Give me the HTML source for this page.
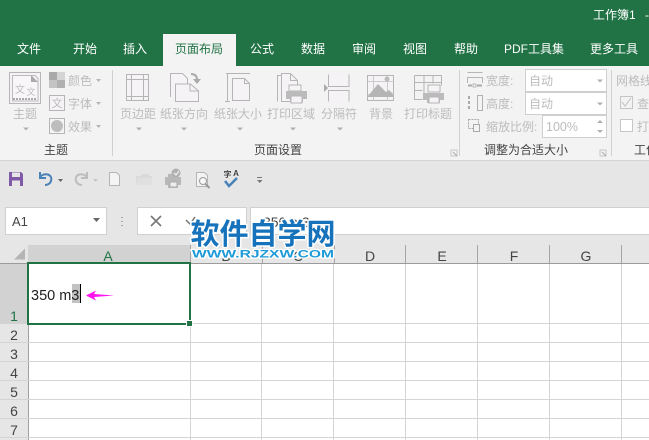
<!DOCTYPE html>
<html><head><meta charset="utf-8"><style>
html,body{margin:0;padding:0;width:649px;height:440px;overflow:hidden;background:#fff}
svg{display:block}
text{font-family:"Liberation Sans","Noto Sans CJK SC",sans-serif;font-size:12px}
.t{fill:#fff;font-size:12px}
.d{fill:#bcbcbc;font-size:12px}
.g{fill:#444;font-size:12px;text-anchor:middle}
.m{text-anchor:middle}
.h{fill:#444;font-size:14px;text-anchor:middle}
.i{fill:none;stroke:#b5b5b5;stroke-width:1}
.f{fill:#b5b5b5}
.p{fill:#f6f3f6;stroke:#b5b5b5;stroke-width:1}
</style></head><body>
<svg width="649" height="440" viewBox="0 0 649 440" xmlns="http://www.w3.org/2000/svg">
<rect width="649" height="66" fill="#217346"/>
<rect y="66" width="649" height="94" fill="#f3f3f3"/>
<rect y="160" width="649" height="1.5" fill="#d4d4d4"/>
<rect y="161" width="649" height="74" fill="#e6e6e6"/>
<text x="593" y="19" class="t">工作簿1</text><text x="645" y="19" class="t">-</text>
<rect x="163" y="34" width="73" height="32" fill="#f3f3f3"/>
<g class="m">
<text x="29" y="53" class="t m">文件</text>
<text x="85" y="53" class="t m">开始</text>
<text x="135" y="53" class="t m">插入</text>
<text x="199" y="53" class="m" fill="#217346">页面布局</text>
<text x="262" y="53" class="t m">公式</text>
<text x="313" y="53" class="t m">数据</text>
<text x="364" y="53" class="t m">审阅</text>
<text x="415" y="53" class="t m">视图</text>
<text x="466" y="53" class="t m">帮助</text>
<text x="534" y="53" class="t m">PDF工具集</text>
<text x="614" y="53" class="t m">更多工具</text>
</g>

<!-- theme group -->
<rect x="9.5" y="72.5" width="31" height="31" fill="#f6f3f6" stroke="#b5b5b5"/>
<path d="M12.5 75.5H35l3 3V101H12.5z" fill="#f8f6f8" stroke="#bbb"/>
<path d="M31 75l7 7h-7z" fill="#aaa"/>
<text x="20" y="93" class="d" style="font-size:10px" text-anchor="middle">文</text>
<text x="31" y="95" class="d" style="font-size:9px" text-anchor="middle">文</text>
<path d="M13 99h24" stroke="#aaa" stroke-width="2" stroke-dasharray="2 1"/>
<text x="25" y="118" class="d m">主题</text>
<path d="M23 127.500h6l-3 3z" fill="#b0b0b0"/>
<rect x="49" y="72" width="16" height="16" fill="#c4c4c4"/>
<rect x="49" y="72" width="8" height="8" fill="#a9a9a9"/><rect x="57" y="80" width="8" height="8" fill="#b0b0b0"/><rect x="57" y="72" width="8" height="8" fill="#d4d4d4"/>
<text x="68" y="85" class="d">颜色</text><path d="M96 79h5l-2.500 3z" fill="#b5b5b5"/>
<rect x="49.500" y="95.500" width="15" height="15" fill="#f6f3f6" stroke="#b5b5b5"/>
<text x="57" y="107" class="d m" style="font-size:11px">文</text>
<text x="68" y="108" class="d">字体</text><path d="M96 102h5l-2.500 3z" fill="#b5b5b5"/>
<rect x="49.500" y="118.500" width="15" height="15" fill="#f6f3f6" stroke="#b5b5b5"/>
<circle cx="57" cy="126" r="6" fill="#bdbdbd"/>
<text x="68" y="131" class="d">效果</text><path d="M96 125h5l-2.500 3z" fill="#b5b5b5"/>
<text x="56" y="154" class="g">主题</text>
<rect x="112" y="70" width="1" height="86" fill="#d0d0d0"/>

<!-- page margin -->
<rect x="126.500" y="74.500" width="22" height="26" class="p"/>
<path d="M126.500 79.500h22M126.500 96.500h22M131.500 74.500v26M143.500 74.500v26" class="i"/>
<text x="138" y="118" class="d m">页边距</text><path d="M136 127.500h6l-3 3z" fill="#b0b0b0"/>
<!-- orientation -->
<path d="M170.500 97V73.500h12l5 5V84" class="p"/>
<path d="M175.500 84.500h15l8 7v10.500h-23z" class="p" transform="translate(0,-0.500)"/>
<path d="M190 84v7h8" class="i"/>
<path d="M191 74c4 0 6 2 6 6" fill="none" stroke="#aaa" stroke-width="2"/><path d="M193 79h8l-4 5z" fill="#aaa"/>
<text x="184" y="118" class="d m">纸张方向</text><path d="M184 127.500h6l-3 3z" transform="translate(-3,0)" fill="#b0b0b0"/>
<!-- size -->
<path d="M226 73.500h24M227.500 74v27M225 101.500h5" class="i"/>
<path d="M232.500 78.500h12l5 5v17h-17z" class="p"/>
<path d="M244.500 78.500v5h5" class="i"/>
<text x="238" y="118" class="d m">纸张大小</text><path d="M237 127.500h6l-3 3z" fill="#b0b0b0"/>
<!-- print area -->
<path d="M277.500 101.500V75.500h4" class="i"/>
<path d="M281.500 73.500h9l7 7v21h-16z" class="p"/>
<path d="M290.500 73.500v7h7" class="i"/>
<rect x="289" y="85" width="12" height="6" fill="#f6f3f6" stroke="#b5b5b5"/>
<path d="M286 91h21v8h-4v3h-13v-3h-4z" fill="#bbb"/><rect x="291" y="96" width="11" height="7" fill="#f6f3f6" stroke="#b5b5b5"/>
<text x="291" y="118" class="d m">打印区域</text><path d="M290 127.500h6l-3 3z" fill="#b0b0b0"/>
<!-- breaks -->
<path d="M328.500 74.500v12h20.500V74.500M328.500 101.500V90.500h20.500v11" class="p"/>
<path d="M324 84l4 4-4 4z" fill="#aaa"/>
<text x="339" y="118" class="d m">分隔符</text><path d="M337 127.500h6l-3 3z" fill="#b0b0b0"/>
<!-- background -->
<rect x="367.500" y="75.500" width="26" height="25" class="p"/>
<path d="M367.500 81.500h26M367.500 94.500h26M373.500 75.500v25M387.500 75.500v25" stroke="#ccc" fill="none"/>
<circle cx="387" cy="79" r="2.500" fill="#bbb"/>
<path d="M368 96l10-12 8 8 3-2 4 4v3h-25z" fill="#b5b5b5"/>
<text x="381" y="118" class="d m">背景</text>
<!-- print titles -->
<path d="M414.500 75.500h27v10M414.500 75.500v24h8M414.500 82.500h27M414.500 90.500h8M424 75.500v24M433 75.500v8" class="i"/>
<rect x="428" y="85" width="12" height="7" fill="#f6f3f6" stroke="#b5b5b5"/>
<path d="M423 93h21v7h-4v3h-13v-3h-4z" fill="#bbb"/><rect x="429" y="97" width="10" height="6" fill="#f6f3f6" stroke="#b5b5b5"/>
<text x="428" y="118" class="d m">打印标题</text>
<text x="278" y="154" class="g">页面设置</text>
<rect x="451" y="150" width="6" height="6" fill="none" stroke="#bbb" stroke-width=".8"/><path d="M453 152l4 4" stroke="#aaa"/>
<rect x="459" y="70" width="1" height="86" fill="#d0d0d0"/>

<!-- scale group -->
<path d="M467.500 72.500h15M467.500 77.500h15M467.500 77v6M482.500 77v6" class="i"/>
<path d="M468 85.500h4M477 85.500h5" stroke="#aaa" stroke-width="2"/>
<rect x="473" y="84" width="3" height="3" fill="none" stroke="#aaa" stroke-width=".8"/>
<text x="486" y="85" class="d">宽度:</text>
<rect x="525.500" y="69.500" width="81" height="22" fill="#fff" stroke="#cfcfcf"/>
<text x="529" y="85" class="d" style="font-size:12px">自动</text><path d="M597 79.500h6l-3 3z" fill="#b0b0b0"/>
<path d="M469 96v14" stroke="#aaa" stroke-width="2" stroke-dasharray="3 2"/>
<rect x="477.500" y="95.500" width="5" height="15" fill="none" stroke="#b0b0b0"/>
<text x="486" y="108" class="d">高度:</text>
<rect x="525.500" y="92.500" width="81" height="22" fill="#fff" stroke="#cfcfcf"/>
<text x="529" y="108" class="d" style="font-size:12px">自动</text><path d="M597 102.500h6l-3 3z" fill="#b0b0b0"/>
<rect x="468.500" y="119.500" width="10" height="9" fill="none" stroke="#aaa" stroke-dasharray="2 1"/><rect x="473.500" y="124.500" width="6" height="7" fill="#f3f3f3" stroke="#aaa"/>
<text x="486" y="131" class="d">缩放比例:</text>
<rect x="542.500" y="115.500" width="64" height="22" fill="#fff" stroke="#cfcfcf"/>
<text x="546" y="131" style="font-size:12.500px;fill:#bcbcbc">100%</text><path d="M597 123l3-3 3 3zM597 130h6l-3 3z" fill="#b0b0b0"/>
<text x="526" y="154" class="g">调整为合适大小</text>
<rect x="600" y="150" width="6" height="6" fill="none" stroke="#bbb" stroke-width=".8"/><path d="M602 152l4 4" stroke="#aaa"/>
<rect x="611" y="70" width="1" height="86" fill="#d0d0d0"/>
<text x="616" y="85" class="d">网格线</text>
<rect x="620.500" y="96.500" width="12" height="12" fill="#f3f3f3" stroke="#c6c6c6"/><path d="M622 102l3 4 6-8" fill="none" stroke="#c0c0c0"/>
<text x="637" y="108" class="d">查看</text>
<rect x="620.500" y="119.500" width="12" height="12" fill="#fff" stroke="#c6c6c6"/>
<text x="637" y="131" class="d">打印</text>
<text x="634" y="154" fill="#444">工作</text>

<!-- QAT -->
<path d="M9 172h12l2 2v12H9z" fill="#805aa6"/><rect x="12" y="172.500" width="8" height="4.500" fill="#e6e6e6"/><rect x="12" y="180.500" width="8" height="5.500" fill="#e6e6e6"/>
<path d="M40 172v6h6M40 177c4-5 13-3 11 4-1 3-4 4-6 4" fill="none" stroke="#4a82b8" stroke-width="2"/>
<path d="M58 179h5l-2.500 3z" fill="#666"/>
<path d="M87 172v6h-6M87 177c-4-5-13-3-11 4 1 3 4 4 6 4" fill="none" stroke="#bdbdbd" stroke-width="2"/>
<path d="M93 179h5l-2.500 3z" fill="#c8c8c8"/>
<path d="M109.500 172.500h7l3 3v10h-10z" fill="#f4f4f4" stroke="#b5b5b5"/>
<path d="M136 185v-9h5l1-2h7v2h3l-1 9z" fill="#dadada"/><path d="M136 185l2-7h14l-2 7z" fill="#e0e0e0"/>
<path d="M165 177h3v-3h10v3h3v8h-3v3h-10v-3h-3z" fill="#b8b8b8"/><rect x="170" y="182" width="7" height="5" fill="#eee" stroke="#aaa"/><circle cx="176" cy="173" r="4.500" fill="#b0b0b0"/><path d="M174 173l2 2 3-4" stroke="#fff" fill="none"/>
<path d="M196.500 172.500h8l3 3v11h-11z" fill="#f3f3f3" stroke="#b5b5b5"/><circle cx="203" cy="181" r="3.500" fill="#f8f8f8" stroke="#9a9a9a"/><path d="M205.500 184l4 4" stroke="#9a9a9a" stroke-width="2"/>
<text x="227.500" y="177" style="font-size:8px;font-weight:bold" fill="#444" text-anchor="middle">字</text><text x="236" y="176" style="font-size:8px;font-weight:bold" fill="#444" text-anchor="middle">A</text>
<path d="M225 181l4 5 8-8" fill="none" stroke="#4a82b8" stroke-width="2.500"/>
<path d="M257 177.500h5" stroke="#777"/><path d="M257 180h5.500l-2.750 3z" fill="#777"/>

<!-- formula bar -->
<rect x="5.500" y="207.500" width="101" height="27" fill="#fff" stroke="#d0d0d0"/>
<text x="12" y="226" style="font-size:13px" fill="#444">A1</text>
<path d="M93 218h7l-3.500 4z" fill="#666"/>
<path d="M122 217v1M122 221v1M122 225v1" stroke="#aaa" stroke-width="2"/>
<rect x="137.500" y="207.500" width="109" height="27" fill="#fff" stroke="#d0d0d0"/>
<path d="M151 216l10 10M161 216l-10 10" stroke="#777" stroke-width="1.600"/>
<path d="M186 220l4 4 5-7" stroke="#777" fill="none" stroke-width="1.500"/>
<rect x="250" y="207" width="399" height="28" fill="#fff"/>
<path d="M250 207.500H649M250 234.500H649M250.500 207v28" stroke="#d0d0d0" fill="none"/>
<text x="263" y="227" style="font-size:14px" fill="#444">350 m3</text>

<!-- headers -->
<rect y="235" width="649" height="28" fill="#e6e6e6"/>
<rect y="263" width="28" height="177" fill="#e6e6e6"/>
<path d="M14 259.500h11v-11z" fill="#b4b4b4"/>
<rect x="28" y="245" width="162" height="18" fill="#d2d2d2"/>
<rect y="263" width="28" height="61" fill="#d2d2d2"/>
<rect x="0" y="263" width="649" height="1" fill="#9b9b9b"/>
<rect x="28" y="263" width="1" height="177" fill="#9f9f9f"/>
<g fill="#a5a5a5"><rect x="190" y="245" width="1" height="18"/><rect x="262" y="245" width="1" height="18"/><rect x="334" y="245" width="1" height="18"/><rect x="405" y="245" width="1" height="18"/><rect x="477" y="245" width="1" height="18"/><rect x="549" y="245" width="1" height="18"/><rect x="621" y="245" width="1" height="18"/></g>
<text x="108" y="261" class="h" style="fill:#217346">A</text>
<text x="226" y="261" class="h">B</text><text x="298" y="261" class="h">C</text>
<text x="370" y="261" class="h">D</text><text x="442" y="261" class="h">E</text><text x="514" y="261" class="h">F</text><text x="586" y="261" class="h">G</text>

<!-- grid -->
<g fill="#d4d4d4">
<rect x="190" y="264" width="1" height="176"/><rect x="261" y="264" width="1" height="176"/><rect x="333" y="264" width="1" height="176"/><rect x="405" y="264" width="1" height="176"/><rect x="477" y="264" width="1" height="176"/><rect x="549" y="264" width="1" height="176"/><rect x="621" y="264" width="1" height="176"/>
<rect x="29" y="323" width="620" height="1"/><rect x="0" y="342" width="649" height="1"/><rect x="0" y="361" width="649" height="1"/><rect x="0" y="380" width="649" height="1"/><rect x="0" y="399" width="649" height="1"/><rect x="0" y="418" width="649" height="1"/><rect x="0" y="437" width="649" height="1"/>
</g>
<text x="14" y="321" class="h" style="fill:#217346">1</text>
<text x="14" y="340" class="h">2</text><text x="14" y="359" class="h">3</text><text x="14" y="378" class="h">4</text><text x="14" y="397" class="h">5</text><text x="14" y="416" class="h">6</text><text x="14" y="435" class="h">7</text>

<!-- cell -->
<rect x="28" y="263" width="162" height="61" fill="#fff" stroke="#217346" stroke-width="2"/>
<rect x="186" y="320" width="7" height="7" fill="#fff"/>
<rect x="187" y="321" width="5" height="5" fill="#217346"/>
<rect x="72" y="284" width="8" height="19" fill="#c2c2c2"/>
<text x="31" y="300" style="font-size:14.500px" fill="#222">350 m3</text>
<rect x="80" y="284" width="1" height="19" fill="#000"/>
<path d="M86 295.500l10-5-2 3.500 20 1.500-20 1.500 2 3.500z" fill="#ff14f0"/>

<!-- watermark -->
<text x="263" y="244" text-anchor="middle" style="font-size:29px;font-weight:bold;font-family:'Noto Sans CJK SC',sans-serif;paint-order:stroke;stroke:#fff;stroke-width:3px;stroke-linejoin:round" fill="#1673bb">软件自学网</text>
<text x="263" y="257.500" text-anchor="middle" textLength="142" lengthAdjust="spacingAndGlyphs" style="font-size:11px;font-weight:bold;paint-order:stroke;stroke:#fff;stroke-width:2.500px;stroke-linejoin:round" fill="#1c9ad8">WWW.RJZXW.COM</text>
</svg>
</body></html>
